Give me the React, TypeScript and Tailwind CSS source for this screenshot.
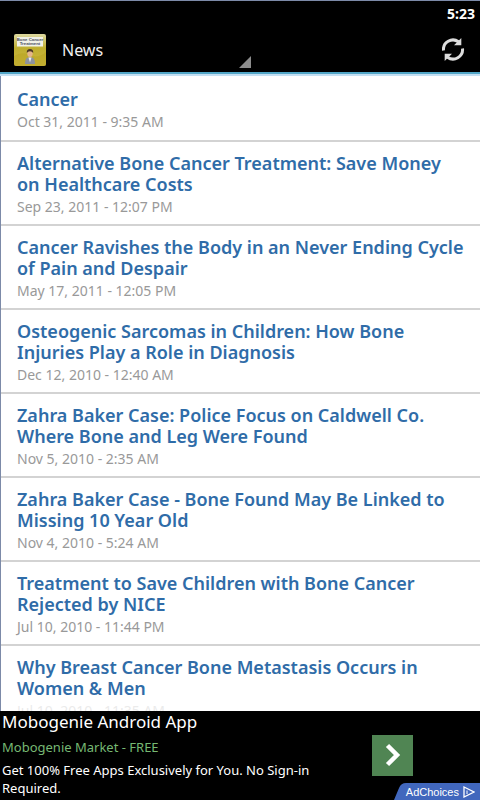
const articles = [
  { title: 'Cancer', date: 'Oct 31, 2011 - 9:35 AM' },
  { title: 'Alternative Bone Cancer Treatment: Save Money on Healthcare Costs', date: 'Sep 23, 2011 - 12:07 PM' },
  { title: 'Cancer Ravishes the Body in an Never Ending Cycle of Pain and Despair', date: 'May 17, 2011 - 12:05 PM' },
  { title: 'Osteogenic Sarcomas in Children: How Bone Injuries Play a Role in Diagnosis', date: 'Dec 12, 2010 - 12:40 AM' },
  { title: 'Zahra Baker Case: Police Focus on Caldwell Co. Where Bone and Leg Were Found', date: 'Nov 5, 2010 - 2:35 AM' },
  { title: 'Zahra Baker Case - Bone Found May Be Linked to Missing 10 Year Old', date: 'Nov 4, 2010 - 5:24 AM' },
  { title: 'Treatment to Save Children with Bone Cancer Rejected by NICE', date: 'Jul 10, 2010 - 11:44 PM' },
  { title: 'Why Breast Cancer Bone Metastasis Occurs in Women & Men', date: 'Jul 10, 2010 - 11:35 AM' },
];

const AppLogo = () => (
  <svg viewBox="0 0 32 32" className="w-8 h-8 shrink-0" aria-hidden="true">
    <defs>
      <linearGradient id="gold" x1="0" y1="0" x2="0" y2="1">
        <stop offset="0" stopColor="#ddd8a0" />
        <stop offset="0.45" stopColor="#bfae2e" />
        <stop offset="1" stopColor="#cdb944" />
      </linearGradient>
    </defs>
    <rect width="32" height="32" rx="2" fill="url(#gold)" />
    <path d="M0 22 Q8 17 16 21 T32 18 V30 a2 2 0 0 1-2 2 H2 a2 2 0 0 1-2-2Z" fill="#b8a21d" opacity="0.5" />
    <rect x="3" y="3" width="26" height="9.500" fill="#f1f1e8" />
    <text x="16" y="7.200" textAnchor="middle" fontSize="4.300" fontWeight="700" fill="#4b5060" fontFamily="Liberation Sans, sans-serif">Bone Cancer</text>
    <text x="16" y="11.300" textAnchor="middle" fontSize="4.300" fontWeight="700" fill="#4b5060" fontFamily="Liberation Sans, sans-serif">Treatment</text>
    <path d="M11 30 q0-6 3-6.500 h4 q3 .5 3 6.500Z" fill="#8d93a0" />
    <path d="M14.500 23.500 h3 l-1.500 5Z" fill="#eceef2" />
    <ellipse cx="16" cy="19.500" rx="2.700" ry="3.500" fill="#e6b58c" />
    <path d="M12.800 19 q-.3-4 3.200-4 t3.200 4 q-1-1.800-3.200-1.800 t-3.200 1.800Z" fill="#4a3526" />
  </svg>
);

const RefreshIcon = () => (
  <svg viewBox="0 0 24 24" className="w-6 h-6" aria-hidden="true">
    <path d="M1.500 12.500 A9.500 9.500 0 0 1 16.500 3.800" fill="none" stroke="#dcdcdc" strokeWidth="3" />
    <path d="M19.300 0 V7.300 H12Z" fill="#dcdcdc" />
    <path d="M20.500 10.500 A9.500 9.500 0 0 1 5.500 19.200" fill="none" stroke="#dcdcdc" strokeWidth="3" />
    <path d="M2.700 23 V15.700 H10Z" fill="#dcdcdc" />
  </svg>
);

export default function App() {
  return (
    <div className="h-screen flex flex-col bg-white overflow-hidden font-['Noto_Sans',sans-serif]">
      {/* Status bar */}
      <div className="h-[26px] shrink-0 bg-black border-t border-[#7c8aa8] flex items-center justify-end px-[5px] text-white text-sm font-bold">
        5:23
      </div>

      {/* Action bar */}
      <header className="h-[50px] shrink-0 bg-black border-b-2 border-[#c3dff2]">
        <div className="h-full flex items-center border-b-2 border-[#52a6c7] pt-0.5 px-3.5">
          <AppLogo />
          <button className="self-stretch w-[189px] ml-4 flex items-center justify-between text-base text-[#f0f0f0]">
            News
            <svg viewBox="0 0 12 12" className="w-3 h-3 self-end mb-1" aria-hidden="true">
              <path d="M12 0 V12 H0Z" fill="#8c8c8c" />
            </svg>
          </button>
          <button className="ml-auto" aria-label="Refresh">
            <RefreshIcon />
          </button>
        </div>
      </header>

      {/* Article list, faded out at its lower edge */}
      <main className="relative flex-1 min-h-0 overflow-hidden border-l border-[#7c8aa8]">
        <ul className="pt-0.5">
          {articles.map((article) => (
            <li key={article.title} className="min-h-16 border-b-2 border-[#d3d3d3] px-4 pt-[11px] pb-[7px]">
              <a href="#" className="block">
                <h2 className="text-lg leading-[21px] font-semibold text-[#2f6ca8]">{article.title}</h2>
                <p className="mt-0.5 text-sm leading-5 text-[#999999]">{article.date}</p>
              </a>
            </li>
          ))}
        </ul>
        <div className="absolute inset-x-0 bottom-0 h-2 bg-white/80" />
      </main>

      {/* Ad banner */}
      <aside className="relative h-[89px] shrink-0 bg-black text-white flex px-0.5">
        <div className="w-[330px]">
          <p className="text-[17px] leading-[22px]">Mobogenie Android App</p>
          <p className="mt-1 text-[13px] leading-5 text-[#76b873]">Mobogenie Market - FREE</p>
          <p className="mt-1 text-[13px] leading-[18px]">Get 100% Free Apps Exclusively for You. No Sign-in Required.</p>
        </div>
        <button className="w-[41px] h-[41px] mt-6 ml-10 bg-[#508553]" aria-label="Open ad">
          <svg viewBox="0 0 41 41" className="w-full h-full" fill="none" stroke="white" strokeWidth="4.500" aria-hidden="true">
            <path d="M15.500 10.500 L25 20 L15.500 29.500" />
          </svg>
        </button>
        <a href="#" className="absolute right-0 bottom-0 h-[17px] pl-3 pr-[5px] flex items-center gap-1 text-[11px] font-['Liberation_Sans',sans-serif]">
          <svg viewBox="0 0 86 17" preserveAspectRatio="none" className="absolute inset-0 w-full h-full" aria-hidden="true">
            <path d="M0 17 L5 5 Q7 0 12 0 H86 V17Z" fill="#4167bd" />
          </svg>
          <span className="relative pt-0.5">AdChoices</span>
          <svg viewBox="0 0 12 12" className="relative w-3 h-3" fill="none" stroke="white" aria-hidden="true">
            <path d="M1 1 L11 6 L1 11Z" strokeWidth="1.300" />
            <path d="M4 4.500 V8" />
          </svg>
        </a>
      </aside>
    </div>
  );
}
